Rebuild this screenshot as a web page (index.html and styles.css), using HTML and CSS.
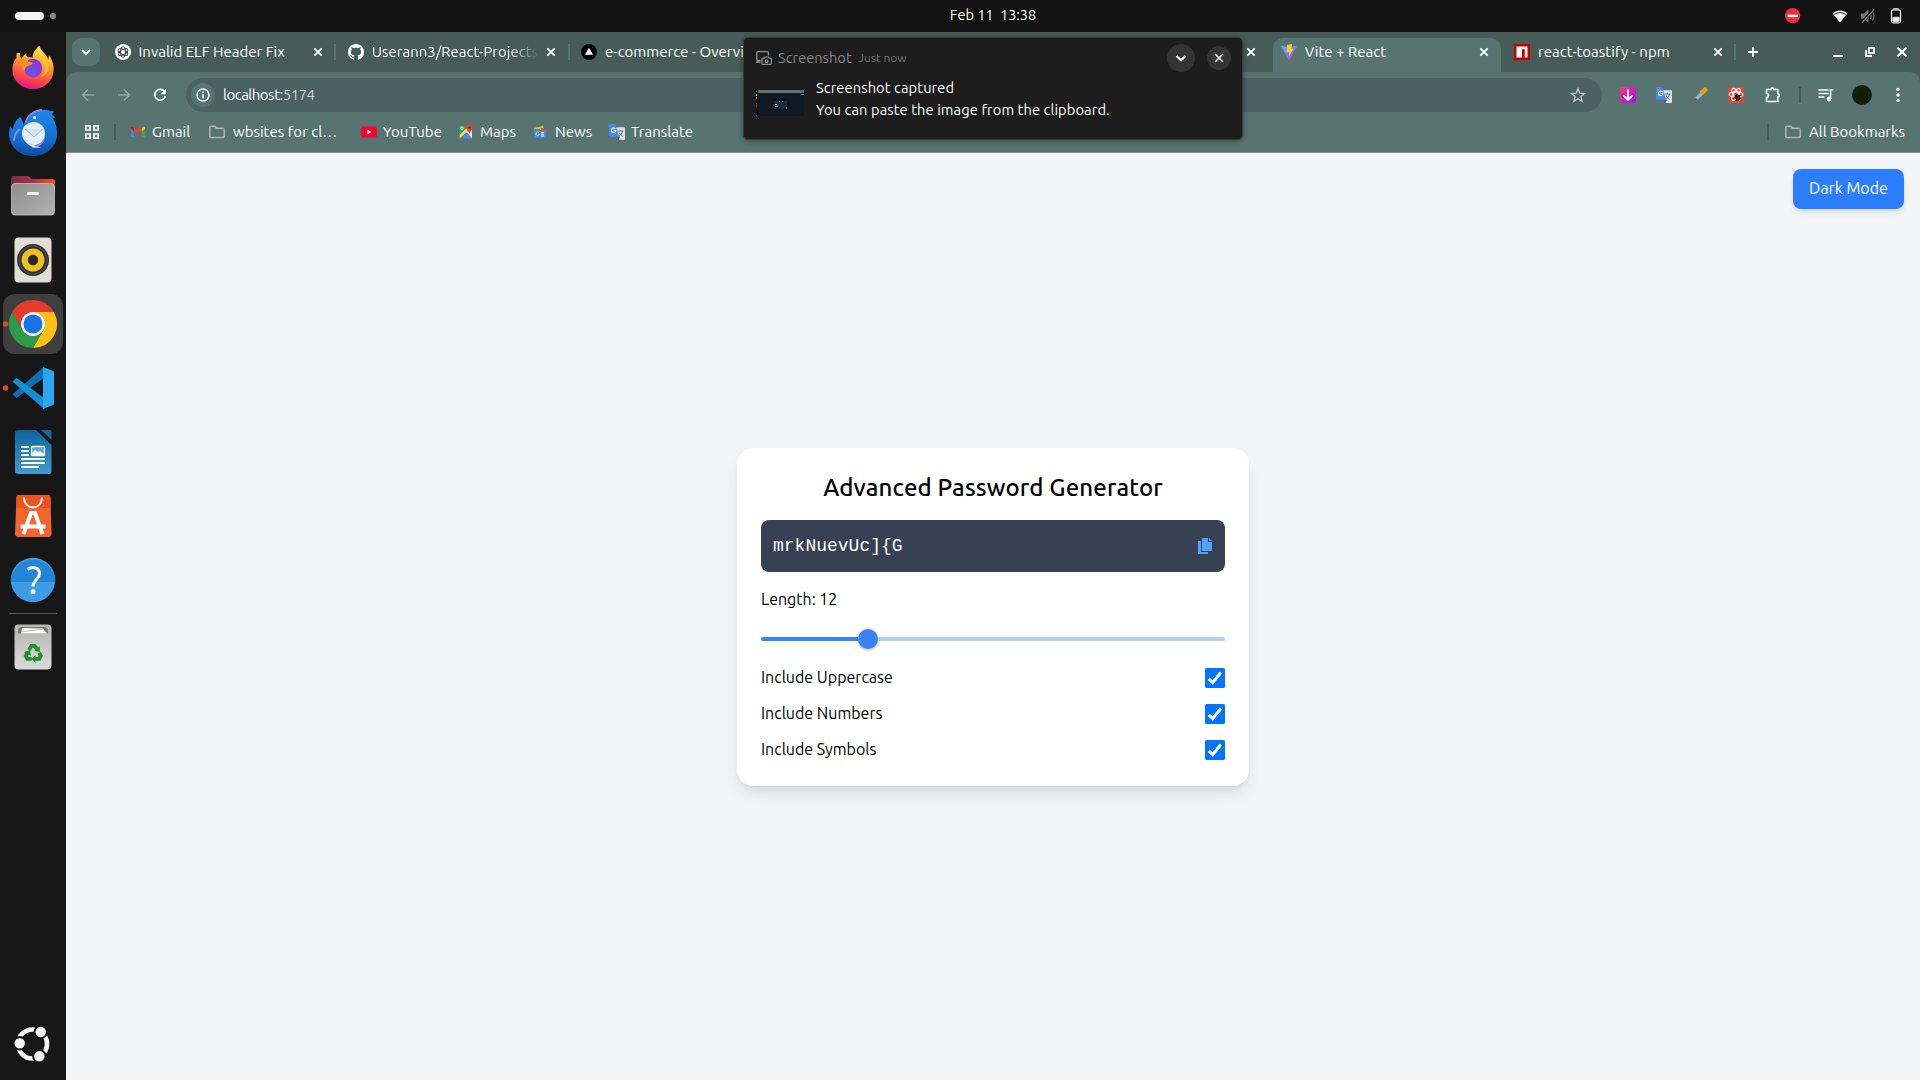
FILE: index.html
```html
<!DOCTYPE html>
<html lang="en">
<head>
<meta charset="utf-8">
<title>Vite + React</title>
<link rel="stylesheet" href="styles.css">
</head>
<body>
<svg class="defs" width="0" height="0" aria-hidden="true">
  <defs>
    <symbol id="close" viewBox="0 0 10 10"><path d="M1.3 1.3l7.4 7.4M8.7 1.3L1.3 8.7" fill="none" stroke="currentColor" stroke-width="1.8"/></symbol>
    <symbol id="folder" viewBox="0 0 16 16"><path d="M.8 12.6V3.2a.9.9 0 0 1 .9-.9h4.1l1.6 1.9h6.9a.9.9 0 0 1 .9.9v7.5a.9.9 0 0 1-.9.9H1.7a.9.9 0 0 1-.9-.9z" fill="none" stroke="#b5b3b8" stroke-width="1.4"/></symbol>
    <symbol id="translate" viewBox="0 0 16 16"><path d="M6 3.2h9.2a.8.8 0 0 1 .8.8v11.2a.8.8 0 0 1-.8.8H9.5z" fill="#dcdfe1"/><path d="M8.5 7h6M11.4 5.8V7M13.5 7c-.5 2.5-2 4.500-4 5.500M10 8.500c.8 1.800 2 3 3.700 4" fill="none" stroke="#687a84" stroke-width="1"/><path d="M8 12.800h3L9.300 16z" fill="#3540c8"/><path d="M.8 0H6l4.300 12.800H.8a.8.8 0 0 1-.8-.8V.8A.8.8 0 0 1 .8 0z" fill="#4a88f4"/><path d="M6.500 5.100A2.200 2.200 0 1 0 6.800 6.500H4.800" fill="none" stroke="#fff" stroke-width="1.100"/></symbol>
    <linearGradient id="ff" x1=".7" y1="0" x2=".4" y2="1"><stop offset="0" stop-color="#fff04f"/><stop offset=".4" stop-color="#ffa22b"/><stop offset=".75" stop-color="#ff4a42"/><stop offset="1" stop-color="#e61587"/></linearGradient>
    <radialGradient id="ffp" cx=".4" cy=".7" r=".7"><stop offset="0" stop-color="#5a5de8"/><stop offset="1" stop-color="#9a2be0"/></radialGradient>
    <linearGradient id="tb" x1="0" y1="0" x2="0" y2="1"><stop offset="0" stop-color="#1f87ea"/><stop offset=".6" stop-color="#1470d2"/><stop offset="1" stop-color="#0f4d9c"/></linearGradient>
    <linearGradient id="fold" x1="0" y1="0" x2="1" y2="0"><stop offset="0" stop-color="#7a2750"/><stop offset=".5" stop-color="#a83447"/><stop offset="1" stop-color="#ee5423"/></linearGradient>
    <linearGradient id="grey" x1="0" y1="0" x2="1" y2="1"><stop offset="0" stop-color="#8d8d8d"/><stop offset="1" stop-color="#b2b2b2"/></linearGradient>
    <linearGradient id="wr" x1="0" y1="0" x2="0" y2="1"><stop offset="0" stop-color="#0d659b"/><stop offset="1" stop-color="#3f9dce"/></linearGradient>
    <linearGradient id="bin" x1="0" y1="0" x2="0" y2="1"><stop offset="0" stop-color="#b5b5b3"/><stop offset="1" stop-color="#dadada"/></linearGradient>
    <linearGradient id="vt" x1="0" y1="0" x2="1" y2="1"><stop offset="0" stop-color="#3fc8ff"/><stop offset="1" stop-color="#b934ff"/></linearGradient>
    <linearGradient id="dl" x1="0" y1="0" x2="1" y2="1"><stop offset="0" stop-color="#f43d70"/><stop offset="1" stop-color="#a507ff"/></linearGradient>
  </defs>
</svg>

<header class="panel">
  <div class="workspaces"><span class="ws-on"></span><span class="ws-off"></span></div>
  <div class="clock">Feb 11&nbsp; 13:38</div>
  <div class="tray">
    <svg class="i-dnd" width="16" height="16" viewBox="0 0 16 16"><circle cx="7.600" cy="7.600" r="7.600" fill="#f22c42"/><path d="M2.500 7.900h10.500" stroke="#fff" stroke-width="2.300"/></svg>
    <svg class="i-wifi" width="16" height="16" viewBox="0 0 16 16"><path d="M8 14.600L.600 5.600C4.800 1.400 11.200 1.400 15.400 5.600z" fill="#f2f2f2"/><path d="M2.600 6.500C5.700 3.900 10.300 3.900 13.400 6.500" fill="none" stroke="#131313" stroke-width="1"/></svg>
    <svg class="i-mute" width="16" height="16" viewBox="0 0 16 16"><path d="M1 5.500h3L8.500 1.500v13L4 10.800H1z" fill="#777"/><path d="M10.300 5.500q1.700 2.700 0 5.500M12.500 3.500q3 4.500 0 9" fill="none" stroke="#777" stroke-width="1.300"/><path d="M13.800.800L1.800 15" stroke="#131313" stroke-width="3"/><path d="M14.200 1.500L2 15" stroke="#777" stroke-width="1.200"/></svg>
    <svg class="i-bat" width="12" height="16" viewBox="0 0 12 16"><rect x="1.500" y="1.800" width="9" height="13" rx="1.800" fill="none" stroke="#f2f2f2" stroke-width="1.300"/><path d="M3.500.700h5M3 9.300h6v4H3z" fill="#f2f2f2" stroke="#f2f2f2" stroke-width="1"/></svg>
  </div>
</header>

<div class="desktop">
  <nav class="dock">
    <svg class="app" viewBox="0 1 66 64"><path d="M20 18c0 3 .5 5 1.500 6 1-3 3.500-5 5-6-.5 2 .2 3.500 1.500 4.500 1.500-.3 3-.4 4.500.3 0-4 2.500-8.500 7-12 1 4 4 6.500 6.500 9.500 1 1.500 1.800 3 2.300 4.500l.7-4.500c4.500 6 5 12 4.500 16C52.500 47 44 54 33 54S12.500 46 12.500 35c0-6 2-10 4-12.500V18z" fill="url(#ff)"/><circle cx="33" cy="33" r="9.200" fill="url(#ffp)"/><path d="M17 26c3-3.500 8-3 11 .5 3.500.3 5 .8 5 1.500-1 2-3 2.500-5 3-3 1-3.500 3.500-3 6-3-5-5-9-8-11z" fill="#ff8f20"/><path d="M41 25c5 4 5.500 13-1 17 8-1 10-9 7.500-15l-5-8z" fill="#ffc13a" opacity=".75"/></svg>
    <svg class="app" viewBox="0 1 66 64"><path d="M20 18c4 5 4 8 2 13 1-5 3-10 6-12 3-6 10-9 18-8 3 .3 6 1 8 1.500l-2 3 3 3-2 1c3 5 4 10 4 15C57 48 46 57 33 57S9 48 9 34l1-7 3 4c0-5 3-10 7-13z" fill="url(#tb)"/><path d="M26 23c1-6 7-11 16-12M14 42c0-5 2-9 6-12M32 48c7 0 12-5 12-10" stroke="#8f85f0" stroke-width="1.800" fill="none"/><circle cx="33.500" cy="34.500" r="11.500" fill="#e3f0fc"/><path d="M25 30l9 8 9-8" fill="#d3e3f3" stroke="#a3bbd1" stroke-width="1"/><circle cx="34.500" cy="18.500" r="1.500" fill="#fff"/><path d="M32 44c3 4 6 4 10 4-6 2-12 0-15-4z" fill="#d6e9fb"/></svg>
    <svg class="app" viewBox="0 1 66 64"><path d="M11 30V15.500A2.500 2.500 0 0 1 13.500 13H28l4 3h20.500a2.500 2.500 0 0 1 2.500 2.500V30z" fill="url(#fold)"/><rect x="11.500" y="20.500" width="43" height="31.500" rx="3.500" fill="url(#grey)" stroke="#c2c2c2" stroke-width=".8"/><rect x="27" y="29" width="12" height="3" rx="1.500" fill="#fff"/></svg>
    <svg class="app" viewBox="0 0 66 64"><rect x="14.500" y="9.500" width="37" height="45" rx="4" fill="#e2ddd3"/><circle cx="33" cy="32" r="16" fill="#2e3039"/><circle cx="33" cy="32" r="14" fill="none" stroke="#555" stroke-width="1"/><circle cx="33" cy="32" r="11.500" fill="#efc022"/><circle cx="33" cy="32" r="5.200" fill="#292929"/></svg>
    <svg class="app" viewBox="0 0 66 64"><rect x="3" y="2" width="60" height="60" rx="12" fill="#3f3f3f"/><circle cx="5.500" cy="32" r="2.700" fill="#d54c1e"/><g transform="translate(33 32)"><path d="M-20.800-12A24 24 0 0 1 20.800-12H0a12 12 0 0 0-10.400 18z" fill="#e43b2e"/><path d="M20.800-12A24 24 0 0 1 0 24L10.400 6A12 12 0 0 0 0-12z" fill="#fdc211"/><path d="M0 24A24 24 0 0 1-20.800-12L-10.400 6A12 12 0 0 0 10.400 6z" fill="#2d9c49"/><circle r="12" fill="#fff"/><circle r="9.600" fill="#1b73e8"/></g></svg>
    <svg class="app" viewBox="0 0 66 64"><circle cx="5.500" cy="32" r="2.700" fill="#d54c1e"/><path d="M12.500 38.500l4 3.500 27-20V11z" fill="#0f6fb5"/><path d="M12.500 25.500l4-3.800L44 42v11z" fill="#168ed5"/><path d="M43 11l11 4.500v33L43 53z" fill="#2aa7f4"/></svg>
    <svg class="app" viewBox="0 0 66 64"><path d="M18 10h18l15.500 15v26a3 3 0 0 1-3 3H18a3 3 0 0 1-3-3V13a3 3 0 0 1 3-3z" fill="url(#wr)"/><path d="M41 10h8a2.500 2.500 0 0 1 2.500 2.500V20z" fill="#146b9d"/><path d="M21 27h8M21 31h8M21 35h8M21 39h24M21 43h24M21 47h18" stroke="#fff" stroke-width="2"/><rect x="31.500" y="26.500" width="13" height="9" rx="1" fill="#52aedd" stroke="#fff" stroke-width="1.300"/><path d="M32 35v-2l3-3 3 2 2-1 4 3v1z" fill="#fff"/></svg>
    <svg class="app" viewBox="0 0 66 64"><path d="M19 11h29a2.500 2.500 0 0 1 2.500 2.500l1 36A3 3 0 0 1 48.500 53h-31a3 3 0 0 1-2.500-3.500l1.500-36A2.500 2.500 0 0 1 19 11z" fill="#f26430"/><path d="M16.500 24V13.500A2.500 2.500 0 0 1 19 11h29a2.500 2.500 0 0 1 2.500 2.500V24z" fill="#ee531c"/><path d="M24 13.500c0 13 18 13 18 0" fill="none" stroke="#fff" stroke-width="1.800"/><path d="M23.500 50L31 29h4l7.500 21M20.500 42.500h25" fill="none" stroke="#fff" stroke-width="4"/></svg>
    <svg class="app" viewBox="0 0 66 64"><circle cx="33" cy="32" r="22.200" fill="#3c9de4"/><path d="M10.800 34a22.200 22.200 0 1 1 44.400 0z" fill="#2385d8"/><path d="M27.500 21.500c5-3.500 12-2 12 4 0 6-6.500 6-6.500 13" fill="none" stroke="#fff" stroke-width="3"/><circle cx="33" cy="43.700" r="2.500" fill="#fff"/></svg>
    <div class="dock-rule"></div>
    <svg class="app" viewBox="0 0 66 64"><rect x="14.500" y="9.500" width="37" height="45" rx="4" fill="url(#bin)"/><path d="M18 18.500c0-5 1-6.500 4-6.500h22c3 0 4 1.500 4 6.500z" fill="#767676"/><path d="M21 18.500l1-5.500 21 .5 4 5z" fill="#fff"/><path d="M21 17l22-3" stroke="#aaa" stroke-width=".8"/><g transform="translate(33 38.500) scale(.8) translate(-32.500 -39)"><g fill="none" stroke="#22902a" stroke-width="4.800"><path d="M27.500 34.500l3-5h4l3 4"/><path d="M40 38l2.300 4-2 3.800H34.500"/><path d="M31 45.800h-5.500L23.500 42l2.500-4.500"/></g><path d="M41 30v7l-7-1zM35.500 41v9.500L30.500 45.800zM21 37l7.500-2 1.500 7z" fill="#22902a"/></g></svg>
    <div class="dock-space"></div>
    <svg class="app" viewBox="0 0 66 64"><g transform="translate(32.500 28)"><circle r="14.500" fill="none" stroke="#f4f4f4" stroke-width="4.600"/><g fill="#f4f4f4" stroke="#131313" stroke-width="2"><circle cx="8.200" cy="-12" r="6.200"/><circle cx="-12.800" cy="-.7" r="6.200"/><circle cx="6.900" cy="12.300" r="6.200"/></g></g></svg>
  </nav>

  <section class="browser">
    <div class="tabstrip">
      <button class="tabsearch"><svg width="12" height="12" viewBox="0 0 12 12"><path d="M2 4l4 4 4-4" fill="none" stroke="#fff" stroke-width="2"/></svg></button>
      <div class="tabs">
        <div class="tab"><svg class="fav" viewBox="0 0 16 16"><circle cx="8" cy="8" r="8" fill="#fff"/><g fill="none" stroke="#333" stroke-width=".9"><ellipse cx="8" cy="8" rx="2.500" ry="5.300"/><ellipse cx="8" cy="8" rx="2.500" ry="5.300" transform="rotate(60 8 8)"/><ellipse cx="8" cy="8" rx="2.500" ry="5.300" transform="rotate(120 8 8)"/></g></svg><span class="label">Invalid ELF Header Fix</span><svg class="x"><use href="#close"/></svg></div>
        <div class="tab"><svg class="fav" viewBox="0 0 16 16"><path fill="#fff" d="M8 0C3.580 0 0 3.580 0 8c0 3.540 2.290 6.530 5.470 7.590.4.070.55-.17.55-.38 0-.19-.01-.82-.01-1.490-2.010.37-2.530-.49-2.690-.94-.09-.23-.48-.94-.82-1.130-.28-.15-.68-.52-.01-.53.63-.01 1.080.58 1.230.82.72 1.210 1.870.87 2.330.66.07-.52.28-.87.51-1.070-1.780-.2-3.640-.89-3.640-3.950 0-.87.31-1.590.82-2.150-.08-.2-.36-1.020.08-2.120 0 0 .67-.21 2.200.82.64-.18 1.320-.27 2-.27s1.360.09 2 .27c1.530-1.040 2.200-.82 2.200-.82.44 1.100.16 1.920.08 2.120.51.56.82 1.270.82 2.150 0 3.070-1.870 3.750-3.650 3.950.29.25.54.73.54 1.480 0 1.070-.01 1.930-.01 2.200 0 .21.15.46.55.38A8.010 8.010 0 0 0 16 8c0-4.420-3.580-8-8-8z"/></svg><span class="label fade">Userann3/React-Projects</span><svg class="x"><use href="#close"/></svg></div>
        <div class="tab"><svg class="fav" viewBox="0 0 16 16"><circle cx="8" cy="8" r="8"/><path d="M8 3.800l4 7H4z" fill="#fff"/></svg><span class="label">e-commerce - Overview</span><svg class="x"><use href="#close"/></svg></div>
        <div class="tab"><span class="fav"></span><span class="label"></span><svg class="x"><use href="#close"/></svg></div>
        <div class="tab"><span class="fav"></span><span class="label"></span><svg class="x"><use href="#close"/></svg></div>
        <div class="tab active"><svg class="fav" viewBox="0 0 16 16"><path d="M0 2l8 1 8-1-7.500 14h-.8z" fill="url(#vt)"/><path d="M6 1l5-1-.5 5 2-.3L8 12.500l.3-4.500-2.600.4z" fill="#ffc81e"/></svg><span class="label">Vite + React</span><svg class="x"><use href="#close"/></svg></div>
        <div class="tab"><svg class="fav" viewBox="0 0 16 16"><path d="M0 0h16v16H0z" fill="#c60000"/><path d="M2.500 2.500h11v11h-2.700V5.300H8v8.200H2.500z" fill="#fff"/></svg><span class="label">react-toastify - npm</span><svg class="x"><use href="#close"/></svg></div>
      </div>
      <svg class="newtab" width="12" height="12" viewBox="0 0 12 12"><path d="M6 1v10M1 6h10" stroke="#fff" stroke-width="1.800"/></svg>
      <div class="winctl">
        <svg width="12" height="12" viewBox="0 0 12 12"><path d="M1 10h10" stroke="#fff" stroke-width="2"/></svg>
        <svg width="12" height="12" viewBox="0 0 12 12"><path d="M4.800 1.900h5.300v5.300H4.800zM2 4v6h6" fill="none" stroke="#fff" stroke-width="1.800"/></svg>
        <svg width="12" height="12" viewBox="0 0 12 12"><path d="M1.500 1.500l9 9M10.500 1.500l-9 9" stroke="#fff" stroke-width="2"/></svg>
      </div>
    </div>

    <div class="toolbar">
      <div class="nav">
        <svg width="16" height="16" viewBox="0 0 16 16"><path d="M14 8H3M8 2.500L2.500 8 8 13.500" fill="none" stroke="#93a6a3" stroke-width="1.600"/></svg>
        <svg width="16" height="16" viewBox="0 0 16 16"><path d="M2 8h11M8 2.500L13.500 8 8 13.500" fill="none" stroke="#93a6a3" stroke-width="1.600"/></svg>
        <svg width="16" height="16" viewBox="0 0 16 16"><path d="M12.800 5A5.400 5.400 0 1 0 13.400 9.300" fill="none" stroke="#fff" stroke-width="1.700"/><path d="M14 1.800v5.400H8.600z" fill="#fff"/></svg>
      </div>
      <div class="omnibox">
        <span class="info"><svg width="16" height="16" viewBox="0 0 16 16"><circle cx="8" cy="8" r="6" fill="none" stroke="#fff" stroke-width="1.500"/><path d="M8 7.200v4M8 4.600v1.500" stroke="#fff" stroke-width="1.500"/></svg></span>
        <span class="url">localhost<i>:5174</i></span>
        <svg width="16" height="16" viewBox="0 0 16 16"><path d="M8 1.700l1.800 4.500 4.800.3-3.700 3.100 1.200 4.700L8 11.700l-4.100 2.600 1.200-4.700-3.700-3.100 4.800-.3z" fill="none" stroke="#c4c8c8" stroke-width="1.300"/></svg>
      </div>
      <div class="exts">
        <svg width="16" height="16" viewBox="0 0 16 16"><rect width="16" height="16" rx="2" fill="url(#dl)"/><path d="M8 2.500v10M3.500 8.500L8 13l4.500-4.500" fill="none" stroke="#fff" stroke-width="1.800"/></svg>
        <svg width="16" height="16"><use href="#translate"/></svg>
        <svg width="16" height="16" viewBox="0 0 16 16"><path d="M1.500 14.500l1.800-4L8.500 5 11 7.500 5.800 12.800z" fill="#69c6e8"/><path d="M1.500 14.500l1.800-4 2.500 2.300z" fill="#e2224f"/><path d="M7.500 4.500l4-3.500a2.200 2.200 0 0 1 3.300 3.200L11 8.300z" fill="#f7980a"/></svg>
        <svg width="16" height="16" viewBox="0 0 16 16"><rect width="16" height="16" fill="#d84a38"/><g fill="none" stroke="#fff" stroke-width="1.100"><ellipse cx="8" cy="7.500" rx="6.800" ry="2.600"/><ellipse cx="8" cy="7.500" rx="6.800" ry="2.600" transform="rotate(60 8 7.500)"/><ellipse cx="8" cy="7.500" rx="6.800" ry="2.600" transform="rotate(120 8 7.500)"/></g><ellipse cx="9.500" cy="10.500" rx="2.500" ry="3.500" fill="#38150f" transform="rotate(-30 9.500 10.500)"/><path d="M5.500 11l8-3M7 14l6-3" stroke="#38150f"/></svg>
        <svg width="18" height="18" viewBox="0 0 18 18"><path d="M2.500 3.500h4.300a1.500 1.500 0 0 1 3 0h4v4.300a1.500 1.500 0 0 1 0 3v4.700H2.500v-4a2 2 0 0 0 0-4z" fill="none" stroke="#fff" stroke-width="1.700" stroke-linejoin="round"/></svg>
      </div>
      <span class="bar"></span>
      <svg class="queue" width="16" height="16" viewBox="0 0 16 16"><path d="M.500 3h10M.500 6.500h10M.500 10h6" stroke="#fff" stroke-width="1.600"/><path d="M12.500 12V2.800h3" fill="none" stroke="#fff" stroke-width="1.600"/><circle cx="11" cy="12" r="2.400" fill="#fff"/></svg>
      <span class="avatar"></span>
      <svg class="kebab" width="16" height="16" viewBox="0 0 16 16"><circle cx="8" cy="2.500" r="1.700" fill="#fff"/><circle cx="8" cy="8" r="1.700" fill="#fff"/><circle cx="8" cy="13.500" r="1.700" fill="#fff"/></svg>
    </div>

    <div class="bookmarks">
      <svg width="16" height="16" viewBox="0 0 16 16"><path d="M1.800 1.800h4.200v4.200H1.800zM10 1.800h4.200v4.200H10zM1.800 10h4.200v4.200H1.800zM10 10h4.200v4.200H10z" fill="none" stroke="#fff" stroke-width="1.700"/></svg>
      <span class="bar"></span>
      <a class="bm w1"><svg width="16" height="16" viewBox="0 0 16 16"><path d="M1 3.500v9.500h3V7z" fill="#4285f4"/><path d="M15 3.500v9.500h-3V7z" fill="#34a853"/><path d="M1 4c0-1.500 1.500-2 2.500-1.300L8 6.200l4.500-3.500C13.500 2 15 2.500 15 4l-7 6z" fill="#ea4335"/><path d="M12 4v3.500l3-2.500V4c0-1.500-1.500-2-3 0z" fill="#fbbc04"/><path d="M4 4v3.500L1 5V4c0-1.500 1.500-2 3 0z" fill="#c5221f"/></svg><span>Gmail</span></a>
      <a class="bm w2"><svg width="16" height="16"><use href="#folder"/></svg><span>wbsites for cl…</span></a>
      <a class="bm w3"><svg width="16" height="16" viewBox="0 0 16 16"><rect y="2.500" width="16" height="11" rx="2.800" fill="#ff0033"/><path d="M6.300 5.700L10.500 8l-4.200 2.300z" fill="#fff"/></svg><span>YouTube</span></a>
      <a class="bm w4"><svg width="16" height="16" viewBox="0 0 16 16"><path d="M1.500 2h8l-8 9z" fill="#34a853"/><path d="M1.500 14.500V11l9-9H14v3z" fill="#fbd24c"/><path d="M2 14.500l6-6 6 6z" fill="#4285f4"/><path d="M9 8.500l5-4v10z" fill="#e3e6e8"/><path d="M11.500.500a3.200 3.200 0 0 1 3.200 3.200c0 2-2 2.800-3.200 6-1.200-3.200-3.200-4-3.200-6A3.200 3.200 0 0 1 11.500.500z" fill="#e54335"/><circle cx="11.500" cy="3.600" r="1.200" fill="#811f18"/><circle cx="4" cy="4.200" r="1.300" fill="none" stroke="#fff" stroke-width=".8"/></svg><span>Maps</span></a>
      <a class="bm w5"><svg width="16" height="16" viewBox="0 0 16 16"><path d="M2 4l9-2 2 6H2z" fill="#fbbc04"/><path d="M1 5h7v6H3z" fill="#34a853"/><path d="M9 4l6 1-1 6H8z" fill="#ea4335"/><rect x="2" y="6" width="12" height="8" rx="1" fill="#4285f4"/><path d="M7 8.800a1.700 1.700 0 1 0 .3 1.500H6M9 8.500h3M9 10.200h3M9 12h3" fill="none" stroke="#fff" stroke-width=".9"/></svg><span>News</span></a>
      <a class="bm w6"><svg width="16" height="16"><use href="#translate"/></svg><span>Translate</span></a>
      <span class="grow"></span>
      <span class="bar"></span>
      <a class="bm w7"><svg width="16" height="16"><use href="#folder"/></svg><span>All Bookmarks</span></a>
    </div>

    <main class="page">
      <button class="mode">Dark Mode</button>
      <div class="card">
        <h1>Advanced Password Generator</h1>
        <div class="field"><code>mrkNuevUc]{G</code><svg width="16" height="16" viewBox="0 0 16 16"><path d="M5 0h6v4h4v9H5z M12 0l3 3h-3z" fill="#51a2ff"/><path d="M1 3h3v11h7v2H1z" fill="#51a2ff"/></svg></div>
        <p class="length">Length: 12</p>
        <div class="slider"><span class="fill"></span><span class="thumb"></span><span class="rest"></span></div>
        <div class="opts">
          <label><span>Include Uppercase</span><svg width="20" height="20" viewBox="0 0 20 20"><rect width="20" height="20" rx="1.500" fill="#0075ff"/><path d="M3.700 10.800l4 3.700 8.200-10" fill="none" stroke="#fff" stroke-width="3"/></svg></label>
          <label><span>Include Numbers</span><svg width="20" height="20" viewBox="0 0 20 20"><rect width="20" height="20" rx="1.500" fill="#0075ff"/><path d="M3.700 10.800l4 3.700 8.200-10" fill="none" stroke="#fff" stroke-width="3"/></svg></label>
          <label><span>Include Symbols</span><svg width="20" height="20" viewBox="0 0 20 20"><rect width="20" height="20" rx="1.500" fill="#0075ff"/><path d="M3.700 10.800l4 3.700 8.200-10" fill="none" stroke="#fff" stroke-width="3"/></svg></label>
        </div>
      </div>
    </main>
  </section>
</div>

<aside class="toast">
  <div class="toast-head">
    <svg width="16" height="16" viewBox="0 0 16 16"><path d="M4.500 10.500H2A1.200 1.200 0 0 1 .8 9.300V2.800A1.200 1.200 0 0 1 2 1.600h9.300a1.200 1.200 0 0 1 1.200 1.200v2.700M0 12h4.500" fill="none" stroke="#8f8f8f" stroke-width="1.400"/><path d="M6.700 8.200h1.800L9.200 7h3.200l.7 1.200h1.500a.8.8 0 0 1 .8.8v4.600a.8.800 0 0 1-.8.8H6.700a.8.800 0 0 1-.8-.8V9a.8.800 0 0 1 .8-.8z" fill="none" stroke="#8f8f8f" stroke-width="1.200"/><circle cx="10.700" cy="11.200" r="1.400" fill="none" stroke="#8f8f8f" stroke-width="1.100"/></svg>
    <span class="src">Screenshot</span><span class="ago">Just now</span>
    <button class="round big"><svg width="12" height="12" viewBox="0 0 12 12"><path d="M1.500 4L6 8.200 10.500 4" fill="none" stroke="#fff" stroke-width="2.200"/></svg></button>
    <button class="round"><svg width="10" height="10" viewBox="0 0 10 10"><path d="M1 1l8 8M9 1L1 9" stroke="#fff" stroke-width="1.500"/></svg></button>
  </div>
  <div class="toast-body">
    <svg width="48" height="27" viewBox="0 0 48 27"><path d="M0 0h48v27H0z" fill="#101826"/><path d="M0 0h2v27H0z" fill="#111"/><path d="M2 1h46v3H2z" fill="#577470"/><path d="M18 12h13v8H18z" fill="#1e2939"/><path d="M45 5h3v1h-3zM19 17h3v1h-3zM30 18h1v2h-1z" fill="#2b7fff"/><path d="M23 12h1v1h-1zM26 12h1v1h-1zM19 15h2v1h-2zM0 5h1v2H0zM0 16h1v1H0zM0 26h1v1H0z" fill="#fff"/><path d="M0 2h1v1H0zM0 8h1v2H0zM0 14h1v1H0z" fill="#e64b2d"/></svg>
    <div class="toast-text"><span>Screenshot captured</span><span>You can paste the image from the clipboard.</span></div>
  </div>
</aside>
</body>
</html>
```
FILE: styles.css
```css
* { box-sizing: border-box; }
body { margin: 0; width: 1920px; height: 1080px; overflow: hidden; display: flex; flex-direction: column; background: #131313; font-family: Ubuntu, "Noto Sans", sans-serif; font-size: 15px; color: #fff; }
button { border: 0; padding: 0; font: inherit; color: inherit; display: flex; align-items: center; justify-content: center; }
svg { display: block; flex: none; }
.defs { position: absolute; }
span, a, code { white-space: nowrap; }

.panel { height: 32px; display: grid; grid-template-columns: 1fr auto 1fr; align-items: center; padding: 0 12px 0 15px; background: #131313; }
.workspaces { display: flex; align-items: center; gap: 6px; }
.ws-on { width: 29px; height: 8px; border-radius: 4px; background: #f4f4f4; }
.ws-off { width: 6px; height: 6px; border-radius: 3px; background: #858585; }
.clock { padding-left: 63px; line-height: 30px; height: 32px; font-size: 14.670px; letter-spacing: -.1px; }
.tray { display: flex; justify-content: flex-end; align-items: center; padding-right: 6px; }
.i-wifi { margin-left: 31px; }
.i-mute { margin-left: 12px; }
.i-bat { margin-left: 14px; }

.desktop { flex: 1; display: flex; min-height: 0; }
.dock { width: 66px; display: flex; flex-direction: column; padding-top: 4px; background: #171717; }
.app { width: 66px; height: 64px; }
.dock-rule { width: 48px; height: 1px; margin: 1px 9px; background: #555; flex: none; }
.dock-space { flex: 1; }

.browser { flex: 1; display: flex; flex-direction: column; background: #475c56; min-width: 0; }
.tabstrip { height: 40px; display: flex; align-items: center; padding-left: 6px; flex: none; }
.tabsearch { width: 28px; height: 28px; border-radius: 9px; background: #577470; }
.tabs { margin-left: 2px; display: grid; grid-template-columns: repeat(7, 233.250px); height: 40px; }
.tab { display: flex; align-items: center; padding: 0 12.200px 0 12.500px; position: relative; min-width: 0; }
.tab::after { content: ""; position: absolute; right: -1px; top: 12px; width: 2px; height: 16px; background: #577470; }
.tab:nth-child(5)::after, .active::after { display: none; }
.fav { width: 16px; height: 16px; margin-right: 8px; flex: none; }
.label { flex: 1; overflow: hidden; height: 20px; line-height: 20px; margin-right: 11px; min-width: 0; }
.fade { margin-right: 0; -webkit-mask-image: linear-gradient(90deg, #000 78%, transparent 96%); mask-image: linear-gradient(90deg, #000 78%, transparent 96%); }
.x { width: 10px; height: 10px; color: #fff; }
.active { z-index: 0; }
.active::before { content: ""; position: absolute; z-index: -1; left: 5px; right: 1px; top: 6px; bottom: 0; border-radius: 10px 10px 0 0; background: #577470; }
.newtab { margin-left: 12px; }
.winctl { margin-left: auto; display: flex; gap: 20px; padding-right: 12px; }

.toolbar { height: 46px; flex: none; display: flex; align-items: center; background: #577470; border-radius: 10px 10px 0 0; padding-left: 14px; }
.nav { display: flex; gap: 20px; width: 106px; }
.omnibox { width: 1416px; height: 34px; border-radius: 17px; background: #4b6262; display: flex; align-items: center; padding: 0 16px 0 5px; }
.info { width: 24px; height: 24px; border-radius: 12px; background: #577470; display: flex; align-items: center; justify-content: center; margin-right: 8px; }
.url { flex: 1; letter-spacing: -.5px; padding-bottom: 2px; }
.url i { font-style: normal; color: #ccd6d5; }
.exts { display: flex; align-items: center; gap: 20px; margin-left: 18px; }
.bar { width: 2px; height: 16px; background: #475c56; flex: none; }
.toolbar .bar { margin-left: 17px; }
.queue { margin-left: 17px; }
.avatar { width: 20px; height: 20px; border-radius: 10px; background: radial-gradient(#101c08, #14240c); margin-left: 18px; }
.kebab { margin-left: 18px; }

.bookmarks { height: 35px; flex: none; display: flex; align-items: center; background: #577470; border-bottom: 1px solid #7b918e; padding: 0 15px 6px 18px; }
.bookmarks .bar { margin-left: 14px; }
.bm { display: flex; align-items: center; gap: 7px; flex: none; }
.bm span { padding-bottom: 2px; }
.w1 { margin-left: 14px; width: 79px; gap: 6px; }
.w2 { width: 152px; gap: 8px; }
.w3 { width: 97px; gap: 6px; }
.w4 { width: 74px; gap: 6px; }
.w5 { width: 77px; }
.w6 { gap: 6px; }
.w7 { margin-left: 16px; width: 120px; gap: 8px; }
.grow { flex: 1; }

.page { flex: 1; background: #f3f4f6; display: flex; flex-direction: column; align-items: center; color: #000; font-size: 16px; }
.mode { align-self: flex-end; margin: 16px 16px 0 0; width: 111px; height: 40px; border-radius: 8px; background: #2b7fff; color: #fff; padding-bottom: 2px; box-shadow: 0 4px 6px -1px #0000001a, 0 2px 4px -2px #0000001a; }
.card { margin-top: 239px; width: 512px; height: 338px; border-radius: 16px; background: #fff; padding: 24px; box-shadow: 0 10px 15px -3px #0000001a, 0 4px 6px -4px #0000001a; }
h1 { margin: 0 0 16px; height: 32px; line-height: 32px; font-size: 24px; font-weight: 500; letter-spacing: .13px; text-align: center; white-space: nowrap; }
.field { height: 52px; border-radius: 8px; background: #364153; color: #fff; padding: 0 12px; display: flex; align-items: center; justify-content: space-between; }
.field code { font: 18px "Liberation Mono", monospace; }
.length { margin: 16px 0 0; height: 24px; line-height: 23px; }
.slider { margin-top: 17px; height: 20px; display: flex; align-items: center; }
.fill { width: 97px; height: 4px; background: #3b82f6; border-radius: 2px 0 0 2px; }
.thumb { width: 20px; height: 20px; border-radius: 10px; background: #3b82f6; box-shadow: 0 1px 3px #0005; }
.rest { flex: 1; height: 4px; background: #b1cdfb; border-radius: 0 2px 2px 0; }
.opts { margin-top: 17px; display: flex; flex-direction: column; gap: 12px; }
.opts label { height: 24px; line-height: 23px; display: flex; justify-content: space-between; }
.opts svg { margin-top: 2px; }

.toast { position: absolute; left: 743px; top: 37px; width: 500px; height: 103px; border-radius: 5px; background: #1d1d1d; border: 1px solid #3d3a3a; box-shadow: 0 1px 5px #0006; padding: 6px 11px 0 12px; font-size: 14.670px; }
.toast-head { height: 28px; display: flex; align-items: center; }
.src { margin-left: 6px; color: #838383; width: 80px; padding-bottom: 2px; }
.ago { color: #75756c; font-size: 12px; flex: 1; padding-bottom: 1px; }
.round { width: 24px; height: 24px; border-radius: 50%; background: #343434; margin-left: 12px; }
.big { width: 28px; height: 28px; }
.toast-body { display: flex; padding-top: 5px; }
.toast-body svg { margin-top: 12px; }
.toast-text { margin-left: 12px; display: flex; flex-direction: column; line-height: 22px; letter-spacing: .1px; }
```
